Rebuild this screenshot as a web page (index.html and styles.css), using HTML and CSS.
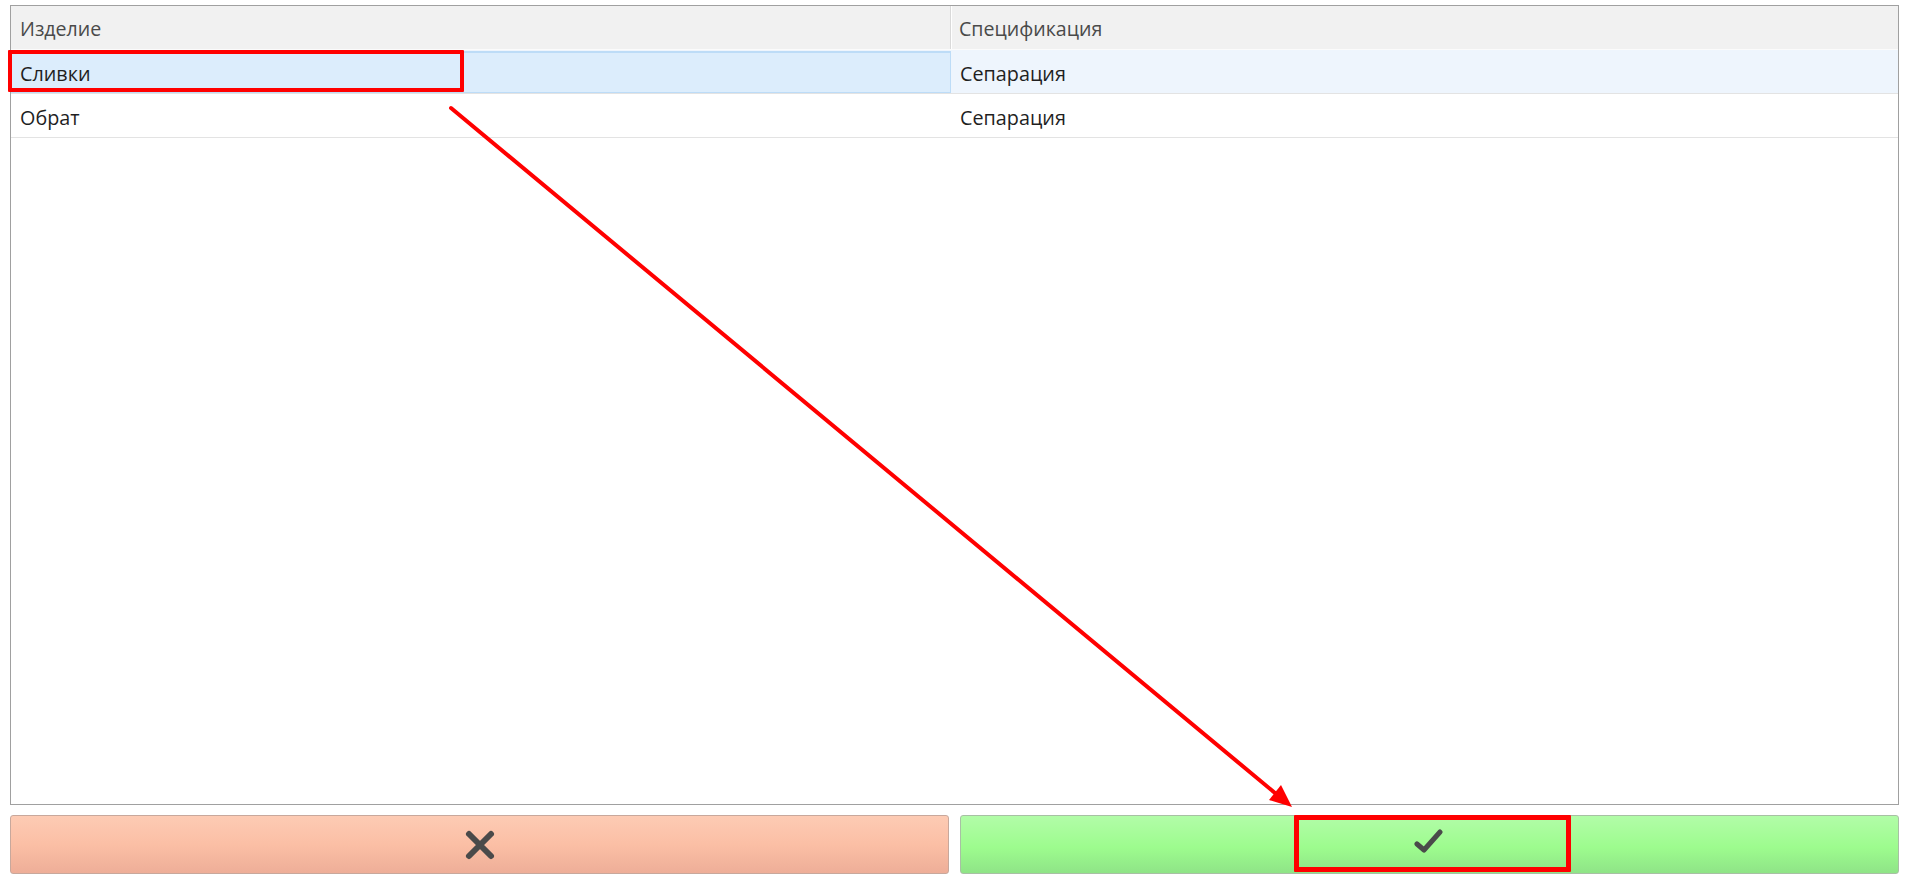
FILE: index.html
```html
<!DOCTYPE html>
<html lang="ru">
<head>
<meta charset="utf-8">
<title>Выбор изделия</title>
<link rel="stylesheet" href="styles.css">
</head>
<body>
<div class="app">
  <div class="grid">
    <div class="row head">
      <div class="cell c1">Изделие</div>
      <div class="cell c2">Спецификация</div>
    </div>
    <div class="row selected">
      <div class="cell c1 focus">Сливки</div>
      <div class="cell c2">Сепарация</div>
    </div>
    <div class="row">
      <div class="cell c1">Обрат</div>
      <div class="cell c2">Сепарация</div>
    </div>
  </div>
  <div class="actions">
    <button class="btn cancel" type="button" aria-label="Отмена">
      <svg width="32" height="32" viewBox="0 0 32 32"><path d="M5 5 L27 27 M27 5 L5 27" stroke="#4a4a4a" stroke-width="6" stroke-linecap="round" fill="none"/></svg>
    </button>
    <button class="btn ok" type="button" aria-label="ОК">
      <svg width="32" height="28" viewBox="0 0 32 28"><path d="M5 15 L12 21 L28 3" stroke="#4a4a4a" stroke-width="5" stroke-linecap="round" stroke-linejoin="round" fill="none"/></svg>
    </button>
  </div>
</div>
<div class="mark mark-row"></div>
<div class="mark mark-ok"></div>
<svg class="arrow" width="1906" height="882" viewBox="0 0 1906 882">
  <line x1="451" y1="108" x2="1275" y2="793" stroke="#ff0000" stroke-width="4" stroke-linecap="round"/>
  <polygon points="1292,807 1269,800 1281,785" fill="#ff0000"/>
</svg>
</body>
</html>
```

FILE: styles.css
```css
html, body {
  margin: 0;
  padding: 0;
  background: #ffffff;
}
body {
  font-family: "Open Sans", "Noto Sans", "DejaVu Sans", sans-serif;
  width: 1906px;
  height: 882px;
  overflow: hidden;
  position: relative;
}
.app {
  padding: 5px 7px 0 10px;
  display: flex;
  flex-direction: column;
}
.grid {
  height: 798px;
  border: 1px solid #a0a0a0;
  background: #fff;
}
.row {
  display: flex;
  height: 43px;
  border-bottom: 1px solid #e3e3e3;
}
.row.head {
  background: #f1f1f1;
  border-bottom: 1px solid #fbfbfb;
}
.cell {
  box-sizing: border-box;
  display: flex;
  align-items: center;
  font-size: 19.8px;
  color: #1f1f1f;
  padding-left: 9px;
  padding-top: 3px;
}
.c1 { width: 940px; }
.c2 { flex: 1; padding-left: 9px; }
.head .cell { color: #4a4a4a; padding-top: 1px; font-size: 19.6px; }
.head .c1 { border-right: 1px solid #d9d9d9; box-shadow: 1px 0 0 #ffffff; }
.head .c2 { padding-left: 8px; }
.row.selected { background: #eef5fd; }
.cell.focus {
  background: #dcedfc;
  border: 1px solid #bddcf7;
  border-top-width: 2px;
  padding-left: 8px;
  padding-top: 1px;
  margin-top: 1px;
}
.actions {
  margin-top: 10px;
  display: grid;
  grid-template-columns: 1fr 1fr;
  gap: 11px;
  height: 59px;
}
.btn {
  border: 1px solid #b4b4b4;
  border-radius: 3px;
  display: flex;
  align-items: center;
  justify-content: center;
  padding: 0;
  margin: 0;
  cursor: pointer;
}
.btn.cancel {
  background: linear-gradient(#fdcbb4, #fbbfa5 50%, #eeae98);
  border-color: #c8a89c;
}
.btn.ok {
  background: linear-gradient(#b2fca8, #9dfc8e 55%, #8fe487);
  border-color: #a8c0a4;
}
.btn.ok svg { margin-left: -4px; margin-top: -4px; }
.mark {
  position: absolute;
  box-sizing: border-box;
  border: 4px solid #ff0000;
  border-radius: 1px;
}
.mark-row {
  left: 8px;
  top: 50px;
  width: 456px;
  height: 42px;
}
.mark-ok {
  left: 1294px;
  top: 815px;
  width: 277px;
  height: 57px;
  border-width: 5px;
}
.arrow {
  position: absolute;
  left: 0;
  top: 0;
  pointer-events: none;
}
```
